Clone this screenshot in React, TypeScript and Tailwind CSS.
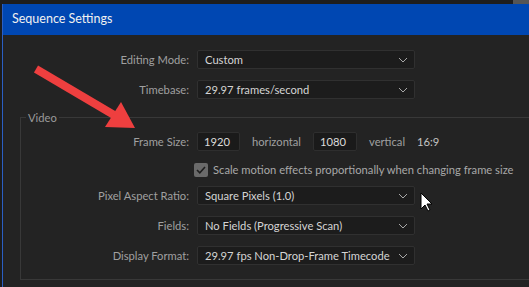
import React from "react";

function Chevron() {
  return (
    <svg width="10" height="6" viewBox="0 0 10 6" className="shrink-0">
      <path d="M1 1 L5 5 L9 1" fill="none" stroke="#a8a8a8" strokeWidth="1" />
    </svg>
  );
}

function Select({ value }: { value: string }) {
  return (
    <div className="flex h-[19px] w-[218px] items-center justify-between rounded-[2px] border border-[#303030] bg-[#1c1c1c] pl-[7px] pr-[6px] text-[#d4d4d4]">
      <span className="whitespace-nowrap">{value}</span>
      <Chevron />
    </div>
  );
}

function Row({ label, children, labelW }: { label: string; children: React.ReactNode; labelW: string }) {
  return (
    <div className="flex h-[19px] items-center">
      <div className={`${labelW} shrink-0 whitespace-nowrap pr-[8px] text-right text-[#a0a0a0]`}>{label}</div>
      {children}
    </div>
  );
}

export default function App() {
  return (
    <div
      className="relative h-[287px] w-[529px] overflow-hidden bg-[#1c1c1c] text-[11.2px] leading-none"
      style={{ fontFamily: 'Lato, "Noto Sans", sans-serif' }}
    >
      <div className="flex h-[4px] w-full justify-end bg-[#1e1e1e]">
        <div className="h-[4px] w-[16px] bg-[#555555]" />
      </div>
      <div className="ml-[2px] w-[620px] border-l border-[#2b5fc4]">
        <div className="flex h-[31px] items-center bg-[#0047b2] pl-[9px] text-[12.5px] text-[#f0f0f0]">
          Sequence Settings
        </div>
        <div className="h-[252px] bg-[#232323] pt-[15px]">
          <div className="flex flex-col gap-[11px]">
            <Row label="Editing Mode:" labelW="w-[194px]">
              <Select value="Custom" />
            </Row>
            <Row label="Timebase:" labelW="w-[194px]">
              <Select value="29.97  frames/second" />
            </Row>
          </div>
          <div className="relative ml-[17px] mt-[18px] h-[163px] border border-[#383838] pt-[14px]">
            <div className="absolute left-[5px] top-[-7px] bg-[#232323] px-[2px] leading-[13px] text-[#9a9a9a]">
              Video
            </div>
            <Row label="Frame Size:" labelW="w-[176px]">
              <div className="flex h-[19px] w-[43px] items-center rounded-[2px] border border-[#2e2e2e] bg-[#1a1a1a] pl-[6px] text-[#dcdcdc]">
                1920
              </div>
              <span className="ml-[12px] text-[#a0a0a0]">horizontal</span>
              <div className="ml-[12px] flex h-[19px] w-[44px] items-center rounded-[2px] border border-[#2e2e2e] bg-[#1a1a1a] pl-[6px] text-[#dcdcdc]">
                1080
              </div>
              <span className="ml-[12px] text-[#a0a0a0]">vertical</span>
              <span className="ml-[12px] text-[#c4c4c4]">16:9</span>
            </Row>
            <div className="mt-[12px] flex h-[14px] items-center pl-[173px]">
              <div className="flex h-[14px] w-[14px] items-center justify-center rounded-[2px] bg-[#6a6a6a]">
                <svg width="10" height="8" viewBox="0 0 10 8">
                  <path d="M1 4 L3.8 6.8 L9 1" fill="none" stroke="#1e1e1e" strokeWidth="1.6" />
                </svg>
              </div>
              <span className="ml-[5px] whitespace-nowrap text-[#a8a8a8]">
                Scale motion effects proportionally when changing frame size
              </span>
            </div>
            <div className="mt-[9px] flex flex-col gap-[11px]">
              <Row label="Pixel Aspect Ratio:" labelW="w-[176px]">
                <Select value="Square Pixels (1.0)" />
              </Row>
              <Row label="Fields:" labelW="w-[176px]">
                <Select value="No Fields (Progressive Scan)" />
              </Row>
              <Row label="Display Format:" labelW="w-[176px]">
                <Select value="29.97 fps Non-Drop-Frame Timecode" />
              </Row>
            </div>
          </div>
        </div>
      </div>
      <svg className="pointer-events-none absolute left-0 top-0" width="529" height="287">
        <line x1="36" y1="69" x2="114" y2="115" stroke="#ee3f3f" strokeWidth="8" strokeLinecap="butt" />
        <polygon points="135,128 105,127 121,102" fill="#ee3f3f" />
        <path
          d="M421 193 L421 209 L425 205 L428 211 L430 210 L427 204 L432 204 Z"
          fill="#ffffff"
          stroke="#000000"
          strokeWidth="1"
        />
      </svg>
    </div>
  );
}
